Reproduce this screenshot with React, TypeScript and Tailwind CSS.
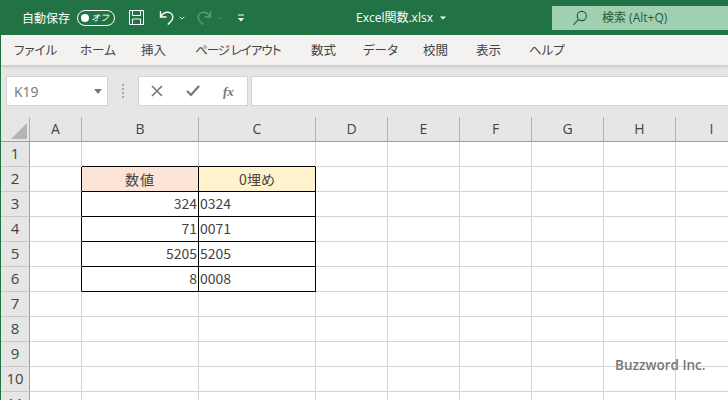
import React from 'react';
import { ChevronDown } from 'lucide-react';

const tabs = [
    { label: 'ファイル', w: 'w-[66px]' },
    { label: 'ホーム', w: 'w-[61px]' },
    { label: '挿入', w: 'w-[54px]' },
    { label: 'ページ レイアウト', w: 'w-[116px] tracking-[-1px]' },
    { label: '数式', w: 'w-[52px]' },
    { label: 'データ', w: 'w-[60px]' },
    { label: '校閲', w: 'w-[53px]' },
    { label: '表示', w: 'w-[53px]' },
    { label: 'ヘルプ', w: 'w-[60px]' },
];

const columns = ['A', 'B', 'C', 'D', 'E', 'F', 'G', 'H', 'I'];
const rows = [1, 2, 3, 4, 5, 6, 7, 8, 9, 10, 11];

const data: Record<string, { text: string; kind: 'head1' | 'head2' | 'num' | 'str' }> = {
    B2: { text: '数値', kind: 'head1' },
    C2: { text: '0埋め', kind: 'head2' },
    B3: { text: '324', kind: 'num' },
    C3: { text: '0324', kind: 'str' },
    B4: { text: '71', kind: 'num' },
    C4: { text: '0071', kind: 'str' },
    B5: { text: '5205', kind: 'num' },
    C5: { text: '5205', kind: 'str' },
    B6: { text: '8', kind: 'num' },
    C6: { text: '0008', kind: 'str' },
};

const Cell = ({ col, row }: { col: string; row: number }) => {
    const blackBottom = (col === 'B' || col === 'C') && row >= 1 && row <= 6;
    const blackRight = (col === 'A' || col === 'B' || col === 'C') && row >= 2 && row <= 6;
    const cell = data[`${col}${row}`];
    let align = '';
    if (cell?.kind === 'head1') align = 'justify-center tracking-[1px]';
    if (cell?.kind === 'head2') align = 'justify-center';
    if (cell?.kind === 'num') align = 'justify-end pr-[1px] pb-[2px]';
    if (cell?.kind === 'str') align = 'justify-start pl-[1px] pb-[2px]';
    let bg = 'bg-white';
    if (cell?.kind === 'head1') bg = 'bg-[#fce4d6]';
    if (cell?.kind === 'head2') bg = 'bg-[#fff2cc]';
    return (
        <div
            className={`flex items-center border-r border-b text-[14px] text-[#444] ${bg} ${align} ${blackBottom ? 'border-b-black' : 'border-b-[#d4d4d4]'} ${blackRight ? 'border-r-black' : 'border-r-[#d4d4d4]'}`}
        >
            {cell?.text}
        </div>
    );
};

const SaveIcon = () => (
    <svg width="17" height="17" viewBox="0 0 17 17" fill="none" stroke="#fff" strokeWidth="1">
        <path d="M1.5 1.5h14v14h-14z" />
        <path d="M4.5 1.5v5h8v-5M4.5 15.5v-5.5h8v5.5" />
    </svg>
);

const UndoIcon = ({ color }: { color: string }) => (
    <svg width="18" height="18" viewBox="0 0 18 18" fill="none" stroke={color} strokeWidth="1.4">
        <path d="M2.5 2v6h6" />
        <path d="M2.8 7.8C4.5 4.5 7 3.2 9.6 3.2c3 0 5.2 2.3 5.2 5.1 0 3.2-2.6 5-5 7.2" />
    </svg>
);

export default function App() {
    return (
        <div className="w-[728px] h-[400px] overflow-hidden flex flex-col bg-[#e6e6e6] font-['Noto_Sans_CJK_JP',sans-serif]">
            {/* Title bar */}
            <div className="h-[35px] shrink-0 bg-[#217346] flex items-center text-white text-[12px]">
                <span className="ml-[22px] w-[55px]">自動保存</span>
                <div className="w-[38px] h-[16px] rounded-full border border-white flex items-center justify-between pl-[3px] pr-[5px]">
                    <span className="w-[8px] h-[8px] rounded-full bg-white" />
                    <span className="text-[9px] italic leading-none">オフ</span>
                </div>
                <div className="ml-[13px] flex items-center"><SaveIcon /></div>
                <div className="ml-[13px] flex items-center"><UndoIcon color="#fff" /></div>
                <ChevronDown size={8} strokeWidth={2.5} className="ml-[2px] text-white" />
                <div className="ml-[9px] -scale-x-100"><UndoIcon color="#5c9c78" /></div>
                <ChevronDown size={8} strokeWidth={2} className="ml-[3px] text-[#5c9c78]" />
                <svg width="8" height="8" viewBox="0 0 8 8" className="ml-[13px]" fill="#fff">
                    <rect x="1" y="0.5" width="6" height="1" />
                    <path d="M1 4h6L4 7.5z" />
                </svg>
                <div className="ml-[111px] w-[100px] flex items-center font-['Open_Sans','Noto_Sans_CJK_JP',sans-serif] whitespace-nowrap">
                    <span>Excel関数.xlsx</span>
                    <svg width="6" height="4" viewBox="0 0 6 4" className="ml-[7px] shrink-0" fill="#fff"><path d="M0 0.5h6L3 3.5z" /></svg>
                </div>
                <div className="ml-auto w-[176px] h-[24px] mt-[1px] bg-[#9fd0b2] flex items-center text-[#1d5c3a] font-['Open_Sans','Noto_Sans_CJK_JP',sans-serif]">
                    <svg width="16" height="16" viewBox="0 0 16 16" className="ml-[20px]" fill="none" stroke="#1d5c3a" strokeWidth="1.1">
                        <circle cx="9.8" cy="6" r="4.6" />
                        <path d="M6.6 9.4L1.4 14.8" />
                    </svg>
                    <span className="ml-[14px]">検索 (Alt+Q)</span>
                </div>
            </div>

            <div className="flex-1 min-h-0 flex flex-col border-l-[1px] border-l-[#217346]">
                {/* Ribbon tabs */}
                <div className="h-[30px] shrink-0 bg-[#f3f2f1] flex items-center text-[12.5px] text-[#444] [font-feature-settings:'palt'] shadow-[0_2px_3px_rgba(0,0,0,0.12)] z-10">
                    {tabs.map((tab) => (
                        <div key={tab.label} className={`${tab.w} shrink-0 pl-[13px] whitespace-nowrap`}>{tab.label}</div>
                    ))}
                </div>

                {/* Formula bar */}
                <div className="h-[52px] shrink-0 flex pt-[11px] pb-[11px] pl-[5px]">
                    <div className="w-[102px] border border-[#d4d4d4] bg-white flex items-center justify-between pl-[7px] pr-[5px] text-[14px] text-[#777] font-['Open_Sans',sans-serif]">
                        <span>K19</span>
                        <svg width="8" height="5" viewBox="0 0 8 5" fill="#777"><path d="M0 0h8L4 5z" /></svg>
                    </div>
                    <div className="w-[30px] flex flex-col items-center justify-center gap-[2px]">
                        <span className="w-[2px] h-[2px] bg-[#aaa]" />
                        <span className="w-[2px] h-[2px] bg-[#aaa]" />
                        <span className="w-[2px] h-[2px] bg-[#aaa]" />
                        <span className="w-[2px] h-[2px] bg-[#aaa]" />
                    </div>
                    <div className="w-[110px] border border-[#d4d4d4] bg-white flex items-center">
                        <svg width="12" height="12" viewBox="0 0 12 12" className="ml-[12px]" fill="none" stroke="#777" strokeWidth="1.6">
                            <path d="M1 1l10 10M11 1L1 11" />
                        </svg>
                        <svg width="14" height="12" viewBox="0 0 14 12" className="ml-[23px]" fill="none" stroke="#777" strokeWidth="2.2">
                            <path d="M1 6l4 4 8-9" />
                        </svg>
                        <span className="ml-[23px] text-[13px] italic font-['Liberation_Serif',serif] font-bold text-[#777] leading-none">fx</span>
                    </div>
                    <div className="ml-[3px] flex-1 border border-[#d4d4d4] border-r-0 bg-white" />
                </div>

                {/* Sheet */}
                <div className="flex-1 min-h-0 relative overflow-hidden">
                    <div className="grid grid-cols-[29px_52px_117px_117px_72px_72px_72px_72px_72px_72px] auto-rows-[25px] font-['Noto_Sans_CJK_JP',sans-serif]">
                        <div className="bg-[#e6e6e6] border-r border-b border-r-[#b0b0b0] border-b-[#9e9e9e] flex items-end justify-end pr-[1px] pb-[1px]">
                            <svg width="18" height="18" viewBox="0 0 18 18" fill="#b4b4b4"><path d="M17 1v16H1z" /></svg>
                        </div>
                        {columns.map((col) => (
                            <div key={col} className="bg-[#e6e6e6] border-r border-b border-r-[#b0b0b0] border-b-[#9e9e9e] flex items-center justify-center pb-[2px] text-[14px] text-[#444] font-['Open_Sans',sans-serif]">
                                {col}
                            </div>
                        ))}
                        {rows.map((row) => (
                            <React.Fragment key={row}>
                                <div className="bg-[#e6e6e6] border-r border-b border-r-[#9e9e9e] border-b-[#c8c8c8] flex items-center justify-center pb-[2px] text-[15px] text-[#444] font-['Open_Sans',sans-serif]">
                                    {row}
                                </div>
                                {columns.map((col) => (
                                    <Cell key={col} col={col} row={row} />
                                ))}
                            </React.Fragment>
                        ))}
                    </div>
                    <span className="absolute left-[614px] top-[238px] text-[13.5px] font-semibold text-[#777] font-['Open_Sans',sans-serif] whitespace-nowrap">Buzzword Inc.</span>
                </div>
            </div>
        </div>
    );
}
